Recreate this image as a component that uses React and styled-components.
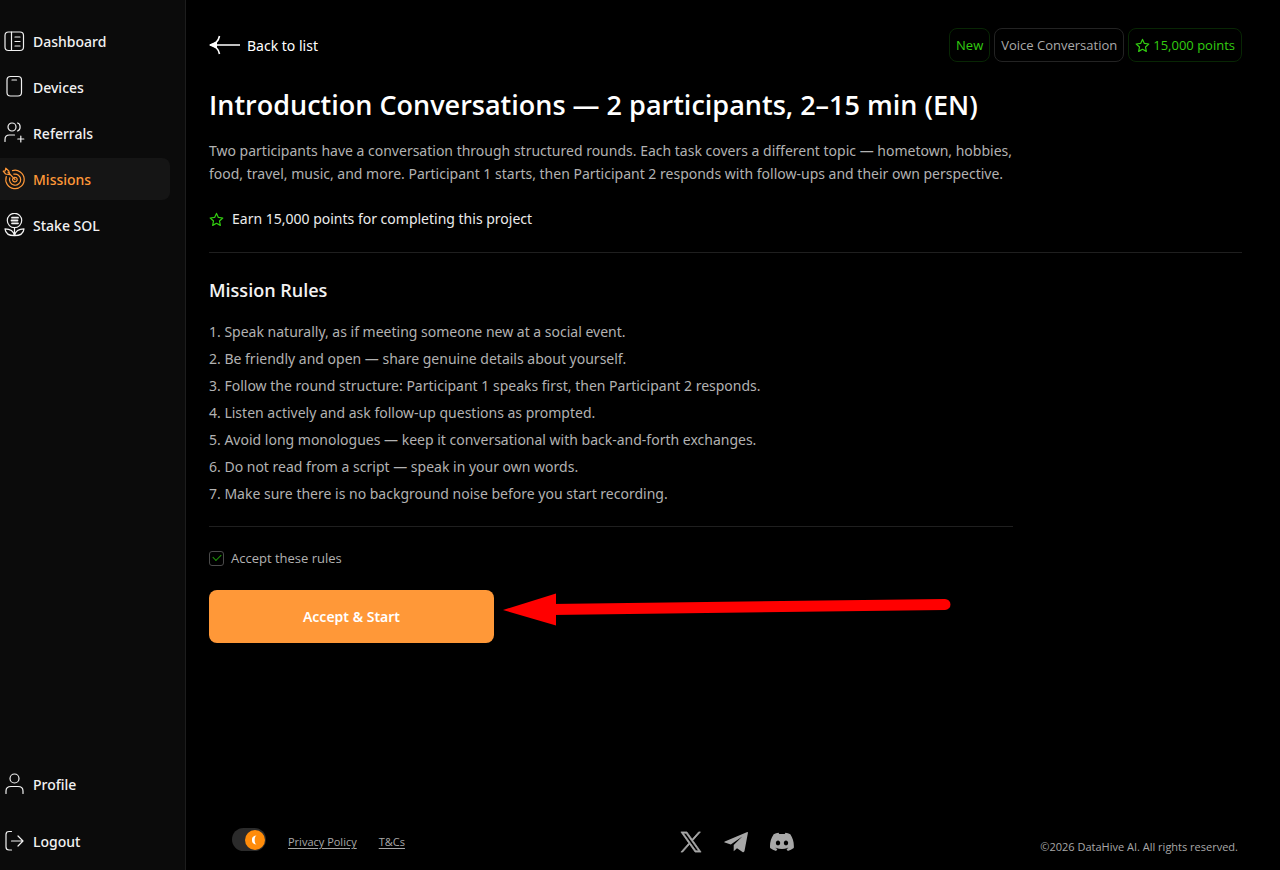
import React, { useState } from 'react'
import styled, { createGlobalStyle, css } from 'styled-components'

const rules = [
  'Speak naturally, as if meeting someone new at a social event.',
  'Be friendly and open — share genuine details about yourself.',
  'Follow the round structure: Participant 1 speaks first, then Participant 2 responds.',
  'Listen actively and ask follow-up questions as prompted.',
  'Avoid long monologues — keep it conversational with back-and-forth exchanges.',
  'Do not read from a script — speak in your own words.',
  'Make sure there is no background noise before you start recording.',
]

const DashboardIcon = () => (
  <Icon viewBox="0 0 24 24">
    <rect x="3" y="3" width="18.500" height="18.500" rx="3.5" />
    <path d="M9.500 3v18.500M13 8h5M13 12.500h5M13 17h5" />
  </Icon>
)

const DevicesIcon = () => (
  <Icon viewBox="0 0 24 24">
    <rect x="5" y="1.500" width="14.500" height="19.500" rx="3.5" />
    <path d="M10 5h4.500" />
  </Icon>
)

const ReferralsIcon = () => (
  <Icon viewBox="0 0 24 24">
    <circle cx="10" cy="6" r="4" />
    <path d="M15.500 2c3.500.8 3.500 7.200 0 8M3 20.500v-2c0-3 2-4.500 4.500-4.500h5M18.800 15v6M15.800 18h6" />
  </Icon>
)

const MissionsIcon = () => (
  <Icon viewBox="0 0 24 24">
    <path d="M10.500 3.600A9.200 9.200 0 1 1 4.300 9.500" />
    <path d="M11.800 7.200A5.600 5.600 0 1 1 7.800 10.800" />
    <path d="M13 12.500l-7-7.300M12.500 10.300a2.300 2.300 0 1 1-1.800 1.500" />
    <path d="M3.600 7L1.200 4.200l2-.4.600-2.600 3 2.800 1 3.600z" />
  </Icon>
)

const StakeIcon = () => (
  <Icon viewBox="0 0 24 24">
    <circle cx="12.500" cy="7.500" r="7.200" />
    <path d="M10 4.700h6M9.500 7.500h6M10 10.300h6" strokeWidth="1.800" />
    <path d="M12.500 15v7.500M12.500 22.700c-6 0-9-2-9.500-6.800 5 0 8.500 2 9.500 6.800zM12.500 22.700c6 0 9-2 9.500-6.800-5 0-8.500 2-9.500 6.800z" />
  </Icon>
)

const ProfileIcon = () => (
  <Icon viewBox="0 0 24 24">
    <circle cx="12.500" cy="6.500" r="4.500" />
    <path d="M4 21.500V19c0-3 2-4.500 5-4.500h7c3 0 5 1.500 5 4.500v2.500" />
  </Icon>
)

const LogoutIcon = () => (
  <Icon viewBox="0 0 24 24">
    <path d="M9.500 2.500H7c-2 0-3 1-3 3V18c0 2 1 3 3 3h2.500M9.500 12h11.500M16 7l5 5-5 5" />
  </Icon>
)

const StarIcon = () => (
  <Star viewBox="0 0 16 16">
    <path d="M8 1.500l2 4.300 4.700.6-3.500 3.200.9 4.700L8 12l-4.100 2.300.9-4.700L1.300 6.400 6 5.800z" />
  </Star>
)

const topLinks = [
  { label: 'Dashboard', icon: <DashboardIcon /> },
  { label: 'Devices', icon: <DevicesIcon /> },
  { label: 'Referrals', icon: <ReferralsIcon /> },
  { label: 'Missions', icon: <MissionsIcon />, active: true },
  { label: 'Stake SOL', icon: <StakeIcon /> },
]

const App = () => {
  const [accepted, setAccepted] = useState(true)
  const [dark, setDark] = useState(true)

  return (
    <>
    <GlobalStyle />
    <Page>
    <Sidebar>
        <Nav>
        {topLinks.map((item) => (
          <NavLink href="#" key={item.label} $active={item.active}>
            {item.icon}
            {item.label}
          </NavLink>
        ))}
        </Nav>
        <Nav $bottom>
        <NavLink href="#"><ProfileIcon />Profile</NavLink>
        <NavLink href="#"><LogoutIcon />Logout</NavLink>
        </Nav>
    </Sidebar>

    <Main>
    <Content>
        <TopBar>
        <BackLink href="#">
            <svg width="31" height="20" viewBox="0 0 31 20" fill="none" stroke="currentColor" strokeWidth="1.600">
              <path d="M2 10h29M10.500 1C9.500 6 6.500 9.300 1 10c5.500.7 8.500 4 9.500 9" />
              <path d="M0 10l8-4v8z" fill="currentColor" stroke="none" />
            </svg>
            Back to list
        </BackLink>
        <Tags>
            <Tag $green>New</Tag>
            <Tag>Voice Conversation</Tag>
            <Tag $green><StarIcon />15,000 points</Tag>
        </Tags>
        </TopBar>

        <Title>Introduction Conversations — 2 participants, 2–15 min (EN)</Title>
        <Description>
        Two participants have a conversation through structured rounds. Each task covers a different topic — hometown, hobbies, food, travel, music, and more. Participant 1 starts, then Participant 2 responds with follow-ups and their own perspective.
        </Description>
        <Earn><StarIcon />Earn 15,000 points for completing this project</Earn>

        <RulesTitle>Mission Rules</RulesTitle>
        <Rules>
        {rules.map((rule, i) => (
          <li key={rule}>{i + 1}. {rule}</li>
        ))}
        </Rules>

        <AcceptLabel>
        <Checkbox type="checkbox" checked={accepted} onChange={(e) => setAccepted(e.target.checked)} />
        Accept these rules
        </AcceptLabel>

        <StartRow>
        <StartButton type="button">Accept &amp; Start</StartButton>
        <Arrow viewBox="0 0 448 34" aria-hidden="true">
            <path d="M48 17.500L442 12.500" stroke="#ff0000" strokeWidth="11" strokeLinecap="round" />
            <path d="M0 18L53 1.500v32z" fill="#ff0000" />
        </Arrow>
        </StartRow>
    </Content>

    <Footer>
        <FooterLeft>
        <Toggle>
            <input type="checkbox" role="switch" aria-label="Dark mode" checked={dark} onChange={(e) => setDark(e.target.checked)} />
            <Knob>
              <svg width="8" height="12" viewBox="0 0 8 12" fill="#fff"><path d="M5.500 1.500C1.500 2 1 4 1 6s.5 4 4.500 4.500C4 9.500 3.700 8 3.700 6S4 2.500 5.500 1.500z" /></svg>
            </Knob>
        </Toggle>
        <FooterLink href="#">Privacy Policy</FooterLink>
        <FooterLink href="#">T&amp;Cs</FooterLink>
        </FooterLeft>
        <Socials>
        <a href="#" aria-label="X">
            <svg width="22" height="22" viewBox="0 0 24 24" fill="currentColor">
              <path d="M14.095 10.316 22.286 1h-1.940L13.230 9.088 7.551 1H1l8.590 12.231L1 23h1.940l7.510-8.543L16.449 23H23zm-2.658 3.022-.872-1.218L3.640 2.432h2.980l5.590 7.821.869 1.219 7.265 10.166h-2.982z" stroke="currentColor" strokeWidth=".8" />
            </svg>
        </a>
        <a href="#" aria-label="Telegram">
            <svg width="24" height="22" viewBox="0 0 24 22" fill="currentColor">
              <path d="M23.300 1L.8 10.500c-.6.300-.6.900 0 1.100l6 2 11.500-8.200L9.700 14v6.300l3.300-3 5.500 3.700c.9.500 1.700.2 2-.9L23.900 2c.1-.9-.1-1.200-.6-1z" />
            </svg>
        </a>
        <a href="#" aria-label="Discord">
            <svg width="24" height="24" viewBox="0 0 24 24" fill="currentColor">
              <path d="M20.317 4.370a19.790 19.790 0 0 0-4.885-1.515l-.687 1.248a18.270 18.270 0 0 0-5.490 0L8.560 2.855A19.740 19.740 0 0 0 3.677 4.370C.533 9.046-.32 13.580.099 18.057a19.900 19.900 0 0 0 5.993 3.030l1.304-1.992a13.100 13.100 0 0 1-1.950-.977l.454-.35c3.928 1.793 8.180 1.793 12.060 0l.46.350c-.6.350-1.250.65-1.950.977l1.300 1.992a19.840 19.840 0 0 0 6.002-3.030c.5-5.177-.838-9.674-3.455-13.687zM8.020 15.330c-1.183 0-2.157-1.085-2.157-2.419s.955-2.419 2.157-2.419 2.176 1.096 2.157 2.419c0 1.334-.956 2.419-2.157 2.419zm7.975 0c-1.183 0-2.157-1.085-2.157-2.419s.955-2.419 2.157-2.419 2.176 1.096 2.157 2.419c0 1.334-.946 2.419-2.157 2.419z" />
            </svg>
        </a>
        </Socials>
        <Copyright>©2026 DataHive AI. All rights reserved.</Copyright>
    </Footer>
    </Main>
    </Page>
    </>
  )
}

const bodyFont = '"Noto Sans", "Open Sans", sans-serif'

const GlobalStyle = createGlobalStyle`
* {
    box-sizing: border-box;
}

body {
    margin: 0;
    background: #000;
    color: #fff;
    font-family: "Open Sans", "Noto Sans", sans-serif;
    font-size: 14px;
}

a {
    color: inherit;
    text-decoration: none;
}
`

const Page = styled.div`
display: flex;
min-height: 100vh;
`

const Sidebar = styled.aside`
display: flex;
flex-direction: column;
justify-content: space-between;
flex: 0 0 186px;
padding: 20px 15px 8px 0;
background: #0b0b0b;
border-right: 1px solid #1d1d1d;
`

const Nav = styled.nav`
display: flex;
flex-direction: column;
gap: ${(props) => (props.$bottom ? '15px' : '4px')};
`

const NavLink = styled.a`
display: flex;
align-items: center;
gap: 7px;
height: 42px;
padding-left: 2px;
border-radius: 0 8px 8px 0;
font-family: ${bodyFont};
font-size: 14px;
font-weight: 500;
color: #f2f2f2;

${(props) => props.$active && css`
    background: #151515;
    color: #ff9838;
`}
`

const Icon = styled.svg`
width: 24px;
height: 24px;
flex-shrink: 0;
fill: none;
stroke: currentColor;
stroke-width: 1.2;
stroke-linecap: round;
stroke-linejoin: round;
`

const Star = styled.svg`
width: 15px;
height: 15px;
flex-shrink: 0;
fill: none;
stroke: #32cd10;
stroke-width: 1.3;
stroke-linejoin: round;
`

const Main = styled.main`
display: flex;
flex-direction: column;
justify-content: space-between;
flex: 1;
min-width: 0;
`

const Content = styled.div`
padding: 28px 38px 40px 23px;
`

const TopBar = styled.div`
display: flex;
align-items: center;
justify-content: space-between;
`

const BackLink = styled.a`
display: flex;
align-items: center;
gap: 7px;
font-family: ${bodyFont};
font-size: 14px;
`

const Tags = styled.div`
display: flex;
gap: 4px;
`

const Tag = styled.span`
display: flex;
align-items: center;
gap: 3px;
height: 34px;
padding: 0 6px;
border: 1px solid ${(props) => (props.$green ? '#082604' : '#232323')};
border-radius: 8px;
font-size: 13px;
color: ${(props) => (props.$green ? '#32cd10' : '#aaa')};
`

const Title = styled.h1`
margin: 23px 0 14px;
font-size: 27px;
line-height: 40px;
font-weight: 600;
`

const Description = styled.p`
max-width: 830px;
margin: 0;
font-family: ${bodyFont};
font-size: 14px;
line-height: 23px;
color: #b2b2b2;
`

const Earn = styled.div`
display: flex;
align-items: center;
gap: 8px;
padding: 22px 0 21px;
border-bottom: 1px solid #1f1f1f;
font-family: ${bodyFont};
font-size: 14px;
line-height: 24px;
color: #ececec;
`

const RulesTitle = styled.h2`
margin: 24px 0 14px;
font-size: 18px;
line-height: 27px;
font-weight: 600;
color: #f2f2f2;
`

const Rules = styled.ol`
list-style: none;
max-width: 804px;
margin: 0;
padding: 0 0 19px;
border-bottom: 1px solid #1f1f1f;
font-family: ${bodyFont};
font-size: 14px;
line-height: 27px;
color: #b2b2b2;
`

const AcceptLabel = styled.label`
display: flex;
align-items: center;
gap: 7px;
width: fit-content;
margin: 20px 0 21px;
font-size: 13px;
line-height: 22px;
color: #b2b2b2;
cursor: pointer;
`

const Checkbox = styled.input`
appearance: none;
display: grid;
place-items: center;
width: 15px;
height: 15px;
margin: 0;
border: 1px solid #4a4a4a;
border-radius: 3px;

&:checked::before {
    content: "";
    width: 7px;
    height: 4px;
    margin-bottom: 3px;
    border: solid #1f9a08;
    border-width: 0 0 1px 1px;
    transform: rotate(-45deg);
}
`

const StartRow = styled.div`
display: flex;
align-items: flex-start;
gap: 9px;
`

const StartButton = styled.button`
width: 285px;
height: 53px;
border: 0;
border-radius: 8px;
background: #ff9838;
color: #fff;
font-family: ${bodyFont};
font-size: 14px;
font-weight: 600;
cursor: pointer;
`

const Arrow = styled.svg`
width: 448px;
height: 34px;
margin-top: 2px;
fill: none;
`

const Footer = styled.footer`
display: grid;
grid-template-columns: 1fr auto 1fr;
padding: 0 42px 16px 46px;
font-size: 11px;
color: #a8a8a8;
`

const FooterLeft = styled.div`
display: flex;
align-items: flex-end;
align-self: start;
gap: 22px;
`

const Toggle = styled.label`
display: flex;
justify-content: flex-end;
align-items: center;
width: 34px;
height: 23px;
padding: 1px;
border-radius: 12px;
background: #2b2b2b;
cursor: pointer;

input {
    appearance: none;
    width: 0;
    height: 0;
    margin: 0;
}
`

const Knob = styled.span`
display: flex;
align-items: center;
justify-content: center;
width: 20px;
height: 20px;
border-radius: 50%;
background: #ff8c0a;
`

const FooterLink = styled.a`
line-height: 19px;
text-decoration: underline;
text-underline-offset: 2px;
`

const Socials = styled.div`
display: flex;
align-items: center;
gap: 22px;
padding: 2px 0 0 4px;

a {
    display: flex;
}
`

const Copyright = styled.span`
align-self: end;
line-height: 15px;
text-align: right;
`

export default App
